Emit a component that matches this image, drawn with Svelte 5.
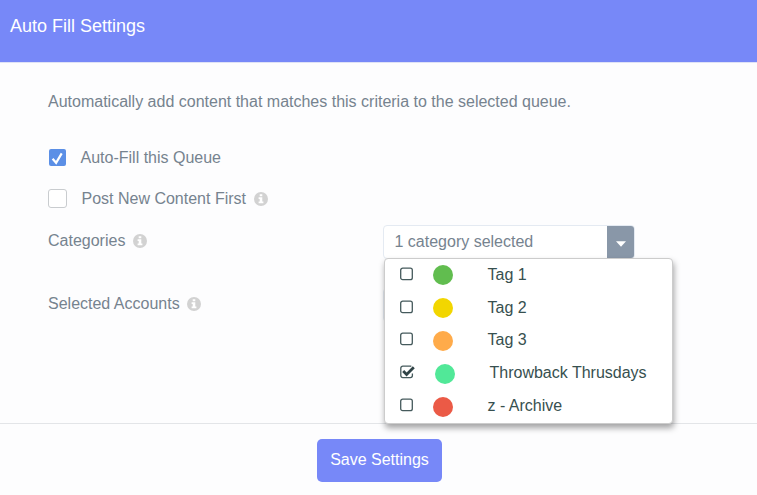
<script lang="ts">
	interface Category {
		name: string;
		color: string;
		selected: boolean;
	}

	let autoFill = $state(true);
	let newFirst = $state(false);
	let menuOpen = $state(true);

	let categories = $state<Category[]>([
		{ name: 'Tag 1', color: '#61bd4f', selected: false },
		{ name: 'Tag 2', color: '#f2d600', selected: false },
		{ name: 'Tag 3', color: '#ffab4a', selected: false },
		{ name: 'Throwback Thrusdays', color: '#51e898', selected: true },
		{ name: 'z - Archive', color: '#eb5a46', selected: false }
	]);

	const selectedCount = $derived(categories.filter((c) => c.selected).length);
	const summary = $derived(
		`${selectedCount} ${selectedCount === 1 ? 'category' : 'categories'} selected`
	);
</script>

{#snippet info()}
	<svg class="info" viewBox="0 0 14 14" aria-hidden="true">
		<circle cx="7" cy="7" r="7" fill="#d2d2d2" />
		<path d="M5.7 2.2h2.6v2.1H5.7zM4.6 5.2h3.7v4.2h1.1v1.9H4.6V9.4h1.1V7.1H4.6z" fill="#fff" />
	</svg>
{/snippet}

<div class="modal">
	<header>
		<h1>Auto Fill Settings</h1>
	</header>

	<main>
		<p>Automatically add content that matches this criteria to the selected queue.</p>

		<button class="option auto-fill" onclick={() => (autoFill = !autoFill)}>
			<span class="box" class:checked={autoFill}>
				{#if autoFill}
					<svg viewBox="0 0 17 17"><path d="M3.6 9.8l3.5 4 5.6-9.4" /></svg>
				{/if}
			</span>
			<span class="option-label">Auto-Fill this Queue</span>
		</button>

		<button class="option new-first" onclick={() => (newFirst = !newFirst)}>
			<span class="box" class:checked={newFirst}>
				{#if newFirst}
					<svg viewBox="0 0 17 17"><path d="M3.6 9.8l3.5 4 5.6-9.4" /></svg>
				{/if}
			</span>
			<span class="option-label">Post New Content First</span>
			{@render info()}
		</button>

		<div class="field">
			<div class="field-label"><span>Categories</span>{@render info()}</div>
			<div class="picker">
				<button class="select" onclick={() => (menuOpen = !menuOpen)}>
					<span class="value">{summary}</span>
					<span class="toggle">
						<svg viewBox="0 0 10 6"><path d="M0 0.3h10L5 5.8z" fill="#fff" /></svg>
					</span>
				</button>
				{#if menuOpen}
					<div class="menu">
						{#each categories as category}
							<button
								class="item"
								class:selected={category.selected}
								onclick={() => (category.selected = !category.selected)}
							>
								<svg class="tick" viewBox="0 0 16 14">
									{#if category.selected}
										<path
											class="outline"
											d="M12.4 8.6v2a2 2 0 0 1-2 2H2.8a2 2 0 0 1-2-2V3.2a2 2 0 0 1 2-2h7.6a2 2 0 0 1 .9.2"
										/>
										<path class="mark" d="M3.2 5.9l3.4 3.5L13.8 2.3" />
									{:else}
										<rect class="outline" x="0.7" y="1.1" width="11.6" height="11.6" rx="2" />
									{/if}
								</svg>
								<span class="dot" style="background: {category.color}"></span>
								<span>{category.name}</span>
							</button>
						{/each}
					</div>
				{/if}
			</div>
		</div>

		<div class="field accounts">
			<div class="field-label"><span>Selected Accounts</span>{@render info()}</div>
			<div class="picker">
				<div class="select"></div>
			</div>
		</div>
	</main>

	<footer>
		<button class="save">Save Settings</button>
	</footer>
</div>

<style>
	:global(body) {
		background: #fdfdfe;
	}

	.modal {
		display: flex;
		flex-direction: column;
		height: 495px;
		font-family: 'Liberation Sans', Arial, sans-serif;
		font-size: 16px;
		line-height: 20px;
		color: #76838f;
	}

	button {
		font: inherit;
		color: inherit;
		padding: 0;
		border: 0;
		background: none;
		text-align: left;
		cursor: pointer;
	}

	svg {
		display: block;
		flex: none;
	}

	header {
		box-sizing: border-box;
		height: 63px;
		padding: 16px 10px;
		background: #7788f8;
		border-bottom: 1px solid #dfe2f6;
	}

	h1 {
		margin: 0;
		font-size: 18px;
		font-weight: 400;
		line-height: 20px;
		color: #fff;
	}

	main {
		box-sizing: border-box;
		height: 360px;
		padding: 29px 48px 0;
	}

	p {
		margin: 0;
		white-space: nowrap;
	}

	.option {
		display: flex;
		align-items: center;
		height: 20px;
	}

	.auto-fill {
		margin-top: 36px;
	}

	.new-first {
		margin-top: 21px;
	}

	.box {
		box-sizing: border-box;
		width: 19px;
		height: 19px;
		margin: 0 14.5px 1px 0;
		border: 1px solid #c9cccf;
		border-radius: 3px;
		background: #fff;
	}

	.box.checked {
		width: 17px;
		height: 17px;
		margin: 0 14.5px 1px 1px;
		border: 0;
		border-radius: 2px;
		background: #5b8fe6;
	}

	.box path {
		fill: none;
		stroke: #fff;
		stroke-width: 2.2;
	}

	.info {
		width: 14px;
		height: 14px;
		margin: 0 0 1px 7.5px;
	}

	.field {
		display: grid;
		grid-template-columns: 335px 252px;
		margin-top: 16px;
	}

	.accounts {
		margin-top: 29px;
	}

	.field-label {
		display: flex;
		align-items: center;
		height: 32px;
	}

	.picker {
		position: relative;
	}

	.select {
		box-sizing: border-box;
		display: flex;
		width: 252px;
		height: 34px;
		border: 1px solid #e4eaf2;
		border-radius: 4px;
		background: #fff;
		overflow: hidden;
	}

	.value {
		flex: 1;
		padding-left: 10.5px;
		line-height: 32px;
	}

	.toggle {
		display: flex;
		align-items: center;
		justify-content: center;
		width: 27px;
		height: 32px;
		padding-top: 2px;
		background: #8997a8;
	}

	.toggle svg {
		width: 10px;
		height: 6px;
	}

	.menu {
		position: absolute;
		z-index: 1;
		top: 33px;
		left: 1px;
		box-sizing: border-box;
		width: 289px;
		height: 166px;
		border: 1px solid #ccc;
		border-radius: 4px;
		background: #fff;
		box-shadow: 1px 4px 6px rgba(0, 0, 0, 0.36);
		color: #37504f;
	}

	.item {
		display: grid;
		grid-template-columns: 33px 54.5px auto;
		align-items: center;
		width: 100%;
		height: 32.8px;
		padding: 0 0 1px 15px;
	}

	.item.selected {
		grid-template-columns: 35px 54.5px auto;
	}

	.tick {
		width: 16px;
		height: 14px;
		margin-bottom: 2px;
	}

	.outline {
		fill: none;
		stroke: #455a5c;
		stroke-width: 1.3;
	}

	.mark {
		fill: none;
		stroke: #2f4346;
		stroke-width: 2.8;
	}

	.dot {
		width: 20px;
		height: 20px;
		margin-top: 1px;
		border-radius: 50%;
	}

	footer {
		flex: 1;
		display: flex;
		justify-content: center;
		align-items: flex-start;
		padding: 15px 0 0 2px;
		border-top: 1px solid #e3e5e8;
	}

	.save {
		width: 125px;
		height: 43px;
		padding-bottom: 2px;
		border-radius: 5px;
		background: #7788f8;
		color: #fff;
		text-align: center;
	}
</style>
